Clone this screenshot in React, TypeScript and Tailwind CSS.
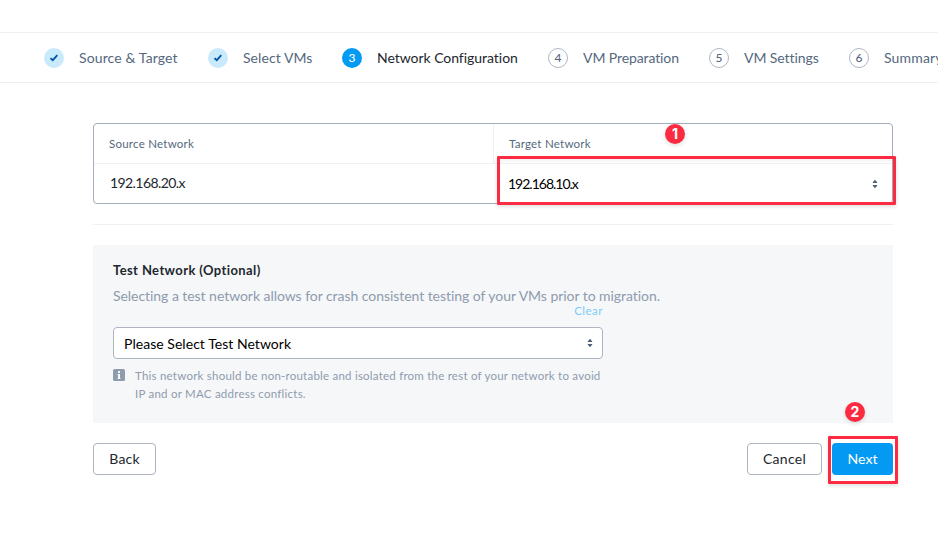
import React from "react";

type Step = { n: number; label: string; width: string; tracking: string; state: "done" | "active" | "todo" };

const steps: Step[] = [
  { n: 1, label: "Source & Target", width: "w-[164px]", tracking: "tracking-[0.12px]", state: "done" },
  { n: 2, label: "Select VMs", width: "w-[134px]", tracking: "tracking-[0.07px]", state: "done" },
  { n: 3, label: "Network Configuration", width: "w-[206px]", tracking: "tracking-[-0.04px]", state: "active" },
  { n: 4, label: "VM Preparation", width: "w-[161px]", tracking: "tracking-[-0.1px]", state: "todo" },
  { n: 5, label: "VM Settings", width: "w-[140px]", tracking: "tracking-[-0.07px]", state: "todo" },
  { n: 6, label: "Summary", width: "w-[120px]", tracking: "tracking-[0.15px]", state: "todo" },
];

function StepCircle({ step }: { step: Step }) {
  if (step.state === "done") {
    return (
      <span className="flex h-5 w-5 shrink-0 items-center justify-center rounded-full bg-[#c9eafd]">
        <svg width="8" height="8" viewBox="0 0 8 8" fill="none" stroke="#0055a4" strokeWidth="1.8">
          <path d="M0.5 4.2 L2.8 6.2 L7.3 1.2" />
        </svg>
      </span>
    );
  }
  return (
    <span
      className={
        step.state === "active"
          ? "flex h-5 w-5 shrink-0 items-center justify-center rounded-full bg-[#0499f3] text-[12px] font-medium text-white"
          : "flex h-5 w-5 shrink-0 items-center justify-center rounded-full border border-[#adb7c5] text-[12px] font-medium text-[#54687e]"
      }
    >
      {step.n}
    </span>
  );
}

function Sorter() {
  return (
    <svg width="6" height="8" viewBox="0 0 6 8" fill="#4c5f77" className="shrink-0">
      <path d="M0.5 3.1 L2.4 0.2 H3.6 L5.5 3.1 Z M0.5 4.9 H5.5 L3.6 7.8 H2.4 Z" />
    </svg>
  );
}

export default function App() {
  return (
    <div className="relative h-[539px] w-[938px] overflow-hidden bg-white font-['Lato',sans-serif] text-[14px] leading-5 text-[#22272e]">
      <div className="mt-8 flex h-[51px] items-center overflow-hidden border-y border-[#eff0f2] pl-11">
        {steps.map((s) => (
          <div key={s.n} className={`flex shrink-0 items-center gap-[15px] whitespace-nowrap ${s.width}`}>
            <StepCircle step={s} />
            <span className={`${s.tracking} ${s.state === "active" ? "text-[#22272e]" : "text-[#54687e]"}`}>{s.label}</span>
          </div>
        ))}
      </div>

      <main className="ml-[93px] mt-10 w-[800px]">
        <div className="h-[81px] overflow-hidden rounded-[4px] border border-[#a4aeba]">
          <div className="flex h-10 border-b border-[#eff0f2] text-[11.5px] text-[#54687e]">
            <div className="flex w-[400px] items-center border-r border-[#eff0f2] pl-[15px] pt-px">
              <span className="tracking-[0.24px]">Source Network</span>
            </div>
            <div className="flex flex-1 items-center pl-[15px] pt-px">
              <span className="tracking-[0.24px]">Target Network</span>
            </div>
          </div>
          <div className="flex h-[39px]">
            <div className="flex w-[400px] items-center pb-px pl-4">
              <span className="tracking-[-0.58px]">192.168.20.x</span>
            </div>
            <div className="flex flex-1 items-center justify-between pl-[14px] pr-[14px] pt-px text-black">
              <span className="tracking-[-1px]">192.168.10.x</span>
              <Sorter />
            </div>
          </div>
        </div>

        <div className="mt-5 h-px bg-[#eff0f2]" />

        <section className="mt-5 h-[178px] bg-[#f6f7f9] px-5 pt-[15px]">
          <h2 className="text-[13px] font-bold">
            <span className="tracking-[0.4px]">Test Network (Optional)</span>
          </h2>
          <p className="mt-[6px] text-[#8e9bad]">
            <span className="tracking-[-0.05px]">Selecting a test network allows for crash consistent testing of your VMs prior to migration.</span>
          </p>
          <div className="-mt-1 flex h-[17px] w-[490px] items-center justify-end text-[11.5px] text-[#7bcbf9]">
            <span className="tracking-[0.5px]">Clear</span>
          </div>
          <div className="mt-2 flex h-8 w-[490px] items-center justify-between rounded-[4px] border border-[#adb4c0] bg-white pl-[10px] pr-[9px] text-black">
            <span className="pt-px tracking-[0.04px]">Please Select Test Network</span>
            <Sorter />
          </div>
          <div className="mt-2 flex gap-[10px] text-[11.5px] leading-[18px] text-[#8e9bad]">
            <svg width="12" height="12" viewBox="0 0 12 12" className="mt-[2px] shrink-0">
              <rect width="12" height="12" rx="1.5" fill="#8e9bad" />
              <path d="M5 2h2v2H5z M4.5 5H7v4.2h.6v.8H4.4v-.8H5V6h-.5z" fill="#f6f7f9" />
            </svg>
            <div className="whitespace-nowrap">
              <span className="tracking-[0.23px]">This network should be non-routable and isolated from the rest of your network to avoid</span>
              <br />
              <span className="tracking-[0.24px]">IP and or MAC address conflicts.</span>
            </div>
          </div>
        </section>

        <div className="mt-5 flex h-8">
          <button className="w-[63px] rounded-[4px] border border-[#adb4c0] bg-white tracking-[0.2px]">Back</button>
          <button className="ml-auto w-[75px] rounded-[4px] border border-[#adb4c0] bg-white tracking-[0.3px]">Cancel</button>
          <button className="ml-[10px] w-[61px] rounded-[4px] bg-[#0499f3] tracking-[0.1px] text-white">Next</button>
        </div>
      </main>

      <div className="absolute left-[497px] top-[156px] h-[49px] w-[399px] rounded-[1px] border-[3px] border-[#fd2b41] shadow-[0_2px_4px_rgba(0,0,0,0.12),inset_0_3px_2px_rgba(0,0,0,0.04)]" />
      <div className="absolute left-[828px] top-[436px] h-[48px] w-[70px] rounded-[1px] border-[3px] border-[#fd2b41] shadow-[0_2px_4px_rgba(0,0,0,0.12)]" />
      <div className="absolute left-[665px] top-[124px] flex h-5 w-5 items-center justify-center rounded-full bg-[#fd2b41] font-['Inter',sans-serif] text-[14px] font-bold text-white shadow-[0_2px_4px_rgba(0,0,0,0.12)]">1</div>
      <div className="absolute left-[845px] top-[402px] flex h-5 w-5 items-center justify-center rounded-full bg-[#fd2b41] font-['Inter',sans-serif] text-[14px] font-bold text-white shadow-[0_2px_4px_rgba(0,0,0,0.12)]">2</div>
    </div>
  );
}
